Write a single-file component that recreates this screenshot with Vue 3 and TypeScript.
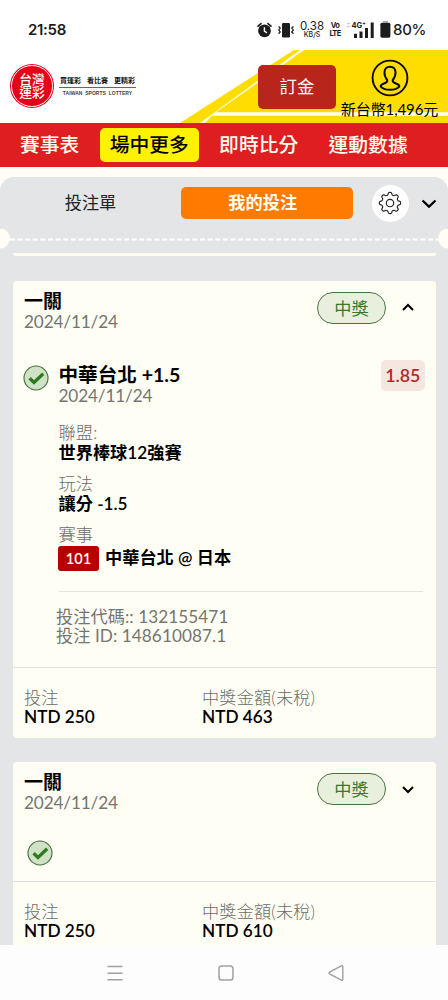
<script setup lang="ts">
interface Detail {
  label: string
  value: string
  tag?: string
}
interface Bet {
  title: string
  date: string
  status: string
  open: boolean
  stake: string
  payout: string
  pick?: { name: string; line: string; date: string; odds: string }
  details: Detail[]
  codes: string[]
}

const tabs: string[] = ['賽事表', '場中更多', '即時比分', '運動數據']
const activeTab = 1

const bets: Bet[] = [
  {
    title: '一關',
    date: '2024/11/24',
    status: '中獎',
    open: true,
    stake: 'NTD 250',
    payout: 'NTD 463',
    pick: { name: '中華台北', line: '+1.5', date: '2024/11/24', odds: '1.85' },
    details: [
      { label: '聯盟:', value: '世界棒球12強賽' },
      { label: '玩法', value: '讓分 -1.5' },
      { label: '賽事', value: '中華台北 @ 日本', tag: '101' },
    ],
    codes: ['投注代碼:: 132155471', '投注 ID: 148610087.1'],
  },
  {
    title: '一關',
    date: '2024/11/24',
    status: '中獎',
    open: false,
    stake: 'NTD 250',
    payout: 'NTD 610',
    details: [],
    codes: [],
  },
]

// Eight rounded teeth around a circle centred on the origin.
const gearPath: string =
  Array.from({ length: 160 }, (_, i) => {
    const a = (i / 160) * Math.PI * 2
    const r = 9.4 + 1.25 * Math.tanh(2 * Math.cos(8 * a))
    return `${i ? 'L' : 'M'}${(r * Math.sin(a)).toFixed(2)} ${(-r * Math.cos(a)).toFixed(2)}`
  }).join('') + 'Z'
</script>

<template>
  <div class="screen">
    <div class="status-bar">
      <span class="clock">21:58</span>
      <div class="status-icons">
        <svg class="alarm" width="15" height="16" viewBox="0 0 15 16">
          <circle cx="7.5" cy="8.8" r="6.4" fill="#1c1c1c" />
          <path d="M1 4.2L4 1.6M14 4.2L11 1.6" stroke="#1c1c1c" stroke-width="1.6" stroke-linecap="round" />
          <path d="M7.4 5.2V9.2L10 10.8" fill="none" stroke="#fff" stroke-width="1.4" />
        </svg>
        <svg class="vibrate" width="16" height="16" viewBox="0 0 16 16">
          <rect x="4" y="1" width="8" height="14.4" rx="1.2" fill="#1c1c1c" />
          <path d="M.6 4.5L2.2 6L.8 8L2.2 10L.6 11.8M15.4 4.5L13.8 6L15.2 8L13.8 10L15.4 11.8" fill="none" stroke="#1c1c1c" stroke-width="1.3" />
        </svg>
        <span class="speed"><b>0.38</b><i>KB/S</i></span>
        <span class="volte"><b>Vo</b><b>LTE</b></span>
        <svg class="signal" width="28" height="18" viewBox="0 0 28 18">
          <path d="M0 2.6h3M0 5.6h3" stroke="#ccc" stroke-width="1.2" />
          <path d="M8.5 12.8V17M14 10.6V17M19.5 7V17M25.2 1.6V17" stroke="#1c1c1c" stroke-width="3" />
          <text x="4.500" y="7.4">4G⁺</text>
        </svg>
        <svg class="battery" width="11" height="17" viewBox="0 0 11 17">
          <path d="M3 .8h5" stroke="#aaa" stroke-width="1.6" />
          <rect x=".4" y="1.7" width="10" height="15" rx="1.6" fill="#1c1c1c" />
        </svg>
        <span class="percent">80%</span>
      </div>
    </div>

    <header class="header">
      <svg class="header-art" width="270" height="73" viewBox="0 0 270 73">
        <path d="M2 73L116 0H270V73Z" fill="#fd0" />
        <path d="M22 73L122 0H126L38 62.300H270V65.700H34L27 73Z" fill="#fffef2" />
      </svg>
      <div class="brand">
        <div class="seal">
          <div class="seal-ring"><span>台灣</span><span>運彩</span></div>
        </div>
        <div class="brand-text">
          <div class="slogan"><span>買運彩</span><span>看比賽</span><span>更精彩</span></div>
          <div class="brand-en">TAIWAN SPORTS LOTTERY</div>
        </div>
      </div>
      <button class="deposit">訂金</button>
      <div class="account">
        <svg width="38" height="38" viewBox="0 0 38 38" fill="none" stroke="#0c0c00">
          <circle cx="19" cy="19" r="17.400" stroke-width="1.9" />
          <path d="M16.300 21.200C14.200 18.500 13.200 15.800 13.500 12.900C13.800 9.700 16 7.800 19 7.800S24.200 9.700 24.500 12.900C24.800 15.800 23.800 18.500 21.700 21.200C21.500 23.200 22.500 23.800 25 24.500C27.200 25.200 28.400 26.200 28.300 27.600C26.400 29.600 23 30.800 19 30.800S11.600 29.600 9.700 27.600C9.600 26.200 10.800 25.200 13 24.500C15.500 23.800 16.500 23.200 16.300 21.200Z" stroke-width="2" stroke-linejoin="round" />
        </svg>
        <span class="balance">新台幣1,496元</span>
      </div>
    </header>

    <nav class="tabs">
      <span v-for="(tab, i) in tabs" :key="tab" class="tab" :class="{ active: i === activeTab }">{{ tab }}</span>
    </nav>

    <main class="slip">
      <div class="slip-head">
        <span class="slip-tab">投注單</span>
        <span class="slip-tab selected">我的投注</span>
        <span class="gear">
          <svg width="24" height="24" viewBox="-12 -12 24 24" fill="none" stroke="#222" stroke-width="1.15">
            <path :d="gearPath" />
            <circle r="3.700" />
          </svg>
        </span>
        <svg class="slip-chevron" width="16" height="10" viewBox="0 0 16 10">
          <path d="M1.500 1.500L8 7.700L14.500 1.500" fill="none" stroke="#000" stroke-width="2.300" />
        </svg>
      </div>
      <div class="perforation">
        <svg width="448" height="20" viewBox="0 0 448 20">
          <path d="M10 10.500H440" stroke="#fff" stroke-width="2.200" stroke-dasharray="5 2.600" />
          <circle cx="0" cy="9.500" r="10" fill="#fffdf5" />
          <circle cx="448" cy="9.500" r="10" fill="#fffdf5" />
        </svg>
      </div>
      <div class="previous-card"></div>

      <section v-for="(bet, n) in bets" :key="n" class="card" :class="{ open: bet.open }">
        <div class="card-head">
          <div class="card-title">
            <div class="title">{{ bet.title }}</div>
            <div class="date">{{ bet.date }}</div>
          </div>
          <span class="status">{{ bet.status }}</span>
          <svg class="chevron" width="12" height="8" viewBox="0 0 12 8">
            <path :d="bet.open ? 'M1 7L6 2L11 7' : 'M1 1L6 6L11 1'" fill="none" stroke="#000" stroke-width="2" />
          </svg>
        </div>

        <div class="card-body">
          <svg class="check" width="26" height="26" viewBox="0 0 26 26">
            <circle cx="13" cy="13" r="12" fill="#cfe2c6" stroke="#47713f" stroke-width="1.1" />
            <path d="M6.600 13.200L11 17.500L20.200 8.700" fill="none" stroke="#2d7a1f" stroke-width="3.300" />
          </svg>
          <div v-if="bet.pick" class="pick">
            <div class="pick-head">
              <div>
                <div class="pick-name">{{ bet.pick.name }} <span>{{ bet.pick.line }}</span></div>
                <div class="date">{{ bet.pick.date }}</div>
              </div>
              <span class="odds">{{ bet.pick.odds }}</span>
            </div>
            <div v-for="d in bet.details" :key="d.label" class="detail">
              <div class="label">{{ d.label }}</div>
              <div class="value" :class="{ tagged: d.tag }"><span v-if="d.tag" class="tag">{{ d.tag }}</span>{{ d.value }}</div>
            </div>
            <div class="codes">
              <div v-for="c in bet.codes" :key="c">{{ c }}</div>
            </div>
          </div>
        </div>

        <div class="card-foot">
          <div class="amount">
            <div class="label">投注</div>
            <div class="value">{{ bet.stake }}</div>
          </div>
          <div class="amount">
            <div class="label">中獎金額(未稅)</div>
            <div class="value">{{ bet.payout }}</div>
          </div>
        </div>
      </section>
    </main>

    <footer class="system-nav">
      <svg width="16" height="16" viewBox="0 0 16 16" fill="none" stroke="#a0a0a0" stroke-width="1.500"><path d="M.5 1.500h15M.5 8.200h15M.5 14.800h15" /></svg>
      <svg width="16" height="16" viewBox="0 0 16 16" fill="none" stroke="#a0a0a0" stroke-width="1.500"><rect x="1" y="1" width="14" height="14" rx="2.800" /></svg>
      <svg width="16" height="16" viewBox="0 0 16 16" fill="none" stroke="#a0a0a0" stroke-width="1.400"><path d="M13.300 .9L1.600 7.100Q.4 8 1.600 8.900L13.300 15.100Q14.800 15.600 14.800 14.200V1.800Q14.800 .4 13.300 .9Z" /></svg>
    </footer>
  </div>
</template>

<style>
html,
body {
  overflow: hidden;
}
</style>

<style scoped>
.screen {
  width: 448px;
  height: 1000px;
  display: flex;
  flex-direction: column;
  overflow: hidden;
  background: #fffdf5;
  color: #000;
  font-family: Lato, "Noto Sans CJK TC", sans-serif;
  font-size: 17.2px;
  font-variant-ligatures: none;
}
.status-bar {
  height: 50px;
  flex: none;
  box-sizing: border-box;
  padding: 9px 22px 0 28px;
  display: flex;
  align-items: center;
  justify-content: space-between;
  background: #fff;
  color: #1c1c1c;
  font-family: Inter, sans-serif;
}
.clock {
  font-size: 15px;
  font-weight: 600;
  letter-spacing: -0.3px;
}
.status-icons {
  display: flex;
  align-items: center;
}
.vibrate {
  margin-left: 6px;
}
.speed {
  display: flex;
  flex-direction: column;
  align-items: center;
  width: 26px;
  margin-left: 5px;
}
.speed b {
  font-size: 11.5px;
  line-height: 10px;
  font-weight: 400;
}
.speed i {
  font-size: 7px;
  line-height: 7px;
  font-style: normal;
  font-weight: 500;
}
.volte {
  display: flex;
  flex-direction: column;
  align-items: center;
  width: 12px;
  margin-left: 4px;
  font-size: 7.5px;
  line-height: 8px;
  letter-spacing: -0.7px;
}
.signal {
  margin-left: 6px;
}
.signal text {
  font-size: 7.5px;
  font-weight: 700;
  fill: #1c1c1c;
}
.battery {
  margin-left: 5px;
}
.percent {
  width: 33px;
  margin-left: 2px;
  font-size: 15px;
  font-weight: 500;
  letter-spacing: -0.3px;
}
.header {
  position: relative;
  height: 73px;
  flex: none;
  display: flex;
  align-items: flex-start;
  background: #fff;
}
.header-art {
  position: absolute;
  right: 0;
  top: 0;
}
.brand {
  display: flex;
  align-items: center;
  width: 258px;
  padding: 14px 0 0 10px;
  box-sizing: border-box;
}
.seal {
  width: 44px;
  height: 44px;
  box-sizing: border-box;
  padding: 1.2px;
  border-radius: 50%;
  background: #e50019;
}
.seal-ring {
  height: 100%;
  box-sizing: border-box;
  border: 0.8px solid #fff;
  border-radius: 50%;
  display: flex;
  flex-direction: column;
  align-items: center;
  justify-content: center;
  color: #fff;
  font-size: 12.8px;
  line-height: 13.2px;
  font-weight: 500;
}
.brand-text {
  width: 77px;
  margin-left: 5px;
}
.slogan {
  display: flex;
  justify-content: space-between;
  padding: 0 1px;
  height: 12px;
  border-bottom: 1px solid #666;
  font-size: 7px;
  line-height: 10px;
  font-weight: 700;
  color: #111;
}
.brand-en {
  margin-top: 1px;
  text-align: center;
  font-family: "Liberation Sans", sans-serif;
  font-size: 5px;
  line-height: 8px;
  word-spacing: 1.2px;
  letter-spacing: 0.05px;
  white-space: nowrap;
  font-weight: 700;
  color: #444;
}
.deposit {
  position: relative;
  width: 78px;
  height: 44px;
  margin: 14.500px 0 0;
  padding: 0 0 2px;
  border: 0;
  border-radius: 5px;
  background: #b8251b;
  color: #fff;
  font: inherit;
  font-size: 17.4px;
}
.account {
  position: relative;
  flex: 1;
  display: flex;
  flex-direction: column;
  align-items: center;
  padding: 8.500px 5px 0 0;
}
.balance {
  margin-top: 2px;
  font-size: 15px;
  line-height: 20px;
  letter-spacing: -0.1px;
  white-space: nowrap;
}
.tabs {
  flex: none;
  height: 44px;
  box-sizing: border-box;
  padding: 0 0 0 10px;
  display: flex;
  align-items: center;
  background: #de1e20;
  color: #fffff0;
  font-size: 19.8px;
  font-weight: 500;
}
.tab {
  height: 34px;
  line-height: 33px;
  padding: 0 10px;
  border-radius: 5px;
}
.tab + .tab {
  margin-left: 10.300px;
}
.tab.active {
  background: #fff200;
  color: #000;
}
.slip {
  flex: 1;
  min-height: 0;
  margin-top: 10px;
  overflow: hidden;
  border-radius: 14px 14px 0 0;
  background: #e4e5e7;
}
.slip-head {
  display: flex;
  align-items: center;
  height: 52px;
}
.slip-tab {
  width: 181px;
  text-align: center;
  line-height: 32px;
  color: #222;
}
.slip-tab.selected {
  width: 171.500px;
  box-sizing: border-box;
  padding-right: 8px;
  border-radius: 5px;
  background: #ff7b00;
  color: #fffef0;
  font-weight: 700;
}
.gear {
  display: flex;
  align-items: center;
  justify-content: center;
  width: 37px;
  height: 37px;
  margin-left: 19px;
  border-radius: 50%;
  background: #fff;
}
.slip-chevron {
  margin-left: 12.500px;
  margin-top: 2px;
}
.perforation {
  height: 24px;
}
.perforation svg {
  display: block;
}
.previous-card {
  height: 3px;
  margin: 0 12.500px 25px;
  border-radius: 0 0 3px 3px;
  background: #fffef5;
}
.card {
  width: 423px;
  margin: 0 auto 24.600px;
  border-radius: 4px;
  background: #fffef5;
}
.card-head {
  display: flex;
  align-items: flex-start;
  height: 81px;
  box-sizing: border-box;
  padding: 9.300px 21.500px 0 11.500px;
}
.card-title {
  flex: 1;
}
.title {
  font-size: 19px;
  line-height: 22px;
  font-weight: 700;
}
.date {
  line-height: 20px;
  letter-spacing: -0.15px;
  color: #757570;
}
.status {
  width: 69px;
  height: 32px;
  margin-top: 1.700px;
  box-sizing: border-box;
  border: 1px solid #47753c;
  border-radius: 16px;
  background: #e8efdd;
  color: #357a2b;
  text-align: center;
  line-height: 31px;
}
.chevron {
  margin: 12.700px 0 0 16px;
}
.card:not(.open) .chevron {
  margin-top: 15px;
}
.card-body {
  display: flex;
  height: 38px;
  padding: 0 10.500px 0 14.500px;
  align-items: flex-start;
}
.card-body .check {
  margin-top: -3px;
  flex: none;
}
.open .card-body {
  height: 305px;
  padding-left: 10.500px;
}
.open .card-body .check {
  margin-top: 2.500px;
}
.pick {
  flex: 1;
  margin-left: 9.500px;
  padding-top: 1px;
}
.pick-head {
  display: flex;
  justify-content: space-between;
  height: 59.800px;
}
.pick-name {
  font-size: 19.6px;
  line-height: 23px;
  font-weight: 700;
}
.odds {
  width: 44.500px;
  height: 30.500px;
  margin-top: -3px;
  border-radius: 5px;
  background: #f5e6df;
  color: #b3282a;
  font-size: 17.8px;
  font-weight: 600;
  line-height: 31px;
  text-align: center;
}
.detail {
  height: 50.900px;
  line-height: 20.500px;
}
.label {
  color: #6c6c68;
  font-weight: 300;
  letter-spacing: 0.15px;
}
.value {
  font-weight: 600;
  white-space: nowrap;
}
.tagged {
  display: flex;
  align-items: center;
  height: 24.500px;
  margin-top: 1px;
}
.tag {
  width: 41px;
  height: 24.500px;
  margin: 0 6px 0 -0.500px;
  border-radius: 3px;
  background: #b80000;
  color: #fffef0;
  font-size: 14.6px;
  line-height: 26px;
  text-align: center;
}
.codes {
  margin: 16px 2.500px 0 0;
  border-top: 1px solid #e4e4de;
  padding-top: 16px;
  line-height: 18.700px;
  letter-spacing: 0.06px;
  color: #757570;
  text-indent: -2.500px;
}
.card-foot {
  display: flex;
  height: 70.500px;
  box-sizing: border-box;
  padding: 21.300px 11.500px 0;
  border-top: 1px solid #e0e1df;
  line-height: 18.800px;
}
.amount {
  width: 178px;
}
.system-nav {
  flex: none;
  height: 55px;
  box-sizing: border-box;
  padding: 0 104px 0 107px;
  display: flex;
  align-items: center;
  justify-content: space-between;
  background: #fdfdfd;
}
</style>
